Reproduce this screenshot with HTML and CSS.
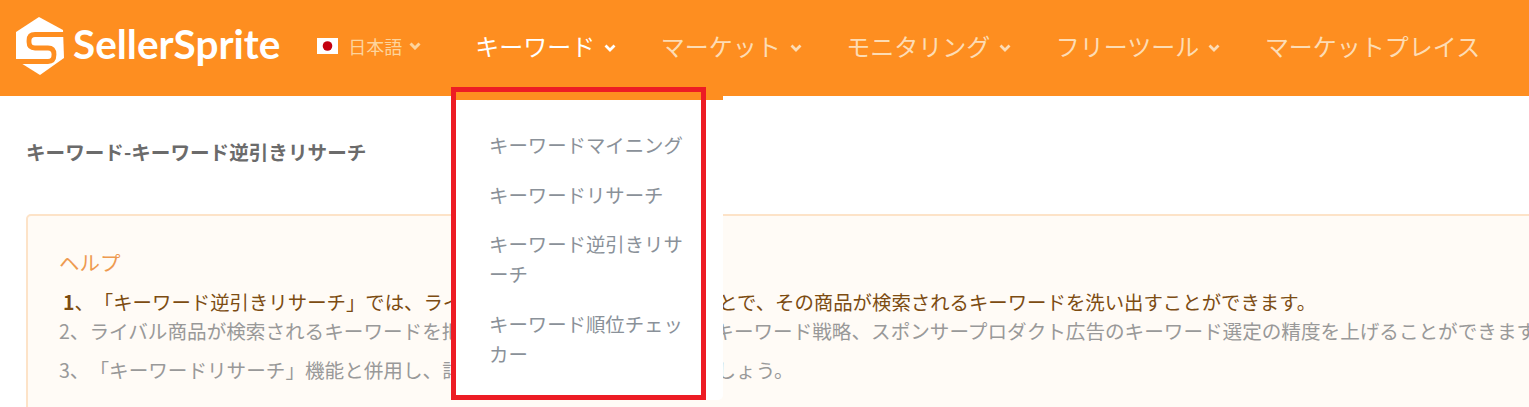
FILE: index.html
```html
<!DOCTYPE html>
<html lang="ja">
<head>
<meta charset="utf-8">
<title>SellerSprite</title>
<link rel="stylesheet" href="styles.css">
</head>
<body>
<header class="topbar">
  <a class="brand">
    <svg class="brand-mark" viewBox="0 0 50 58" width="50" height="58">
      <path class="hex" d="M24 0 48 13 49 41 25 58 1 43 1 15Z"/>
      <path class="s-cut" d="M52 17.500H20Q14 17.500 14 23.500V25Q14 31 20 31H33Q39 31 39 37.500Q39 44.500 33 44.500H-2"/>
    </svg>
    <span class="brand-name">SellerSprite</span>
  </a>
  <div class="lang">
    <svg class="flag" viewBox="0 0 21 16" width="21" height="16"><rect width="21" height="16" fill="#fff"/><circle cx="10.500" cy="8" r="4.800" fill="#c4000f"/></svg>
    <span>日本語</span>
    <svg class="chev" viewBox="0 0 12 8" width="12" height="8"><path d="M1.500 1.500 6 6 10.500 1.500"/></svg>
  </div>
  <nav class="nav">
    <a class="nav-item active">キーワード<svg class="chev" viewBox="0 0 12 8" width="12" height="8"><path d="M1.500 1.500 6 6 10.500 1.500"/></svg></a>
    <a class="nav-item">マーケット<svg class="chev" viewBox="0 0 12 8" width="12" height="8"><path d="M1.500 1.500 6 6 10.500 1.500"/></svg></a>
    <a class="nav-item">モニタリング<svg class="chev" viewBox="0 0 12 8" width="12" height="8"><path d="M1.500 1.500 6 6 10.500 1.500"/></svg></a>
    <a class="nav-item">フリーツール<svg class="chev" viewBox="0 0 12 8" width="12" height="8"><path d="M1.500 1.500 6 6 10.500 1.500"/></svg></a>
    <a class="nav-item">マーケットプレイス</a>
  </nav>
</header>
<main class="content">
  <h1 class="page-title">キーワード-キーワード逆引きリサーチ</h1>
  <section class="help">
    <h2 class="help-title">ヘルプ</h2>
    <p class="help-lead"><b>1</b>、「キーワード逆引きリサーチ」では、ライバル商品のASINを入力することで、その商品が検索されるキーワードを洗い出すことができます。</p>
    <p class="help-line">2、ライバル商品が検索されるキーワードを把握することで、商品ページのキーワード戦略、スポンサープロダクト広告のキーワード選定の精度を上げることができます</p>
    <p class="help-line">3、「キーワードリサーチ」機能と併用し、詳細なキーワード分析を行いましょう。</p>
  </section>
</main>
<div class="dropdown">
  <a class="dropdown-item">キーワードマイニング</a>
  <a class="dropdown-item">キーワードリサーチ</a>
  <a class="dropdown-item">キーワード逆引きリサーチ</a>
  <a class="dropdown-item">キーワード順位チェッカー</a>
</div>
<div class="highlight"></div>
</body>
</html>
```
FILE: styles.css
```css
* { box-sizing: border-box; }
html, body { margin: 0; height: 407px; overflow: hidden; }
body {
  background: #fff;
  font-family: "Noto Sans CJK JP", "Liberation Sans", sans-serif;
  color: #666;
  text-spacing-trim: space-all;
  font-feature-settings: "palt" 0, "chws" 0;
}
.topbar {
  display: flex;
  align-items: center;
  height: 96px;
  padding: 0 0 5px 15px;
  background: #fe8e20;
  white-space: nowrap;
}
.brand { display: flex; align-items: center; gap: 8px; }
.brand-mark { display: block; }
.hex { fill: #fff; }
.s-cut { fill: none; stroke: #fe8e20; stroke-width: 4.800; }
.brand-name {
  font-family: "Lato", sans-serif;
  font-size: 40.500px;
  font-weight: 700;
  color: #fff;
  line-height: 1;
  margin-top: -2px;
}
.lang {
  display: flex;
  align-items: center;
  margin-left: 37px;
  font-size: 18px;
  color: #fdd49c;
}
.flag { margin-right: 10px; }
.lang .chev { margin-left: 7px; stroke: #fdd49c; stroke-width: 3; }
.chev { fill: none; stroke: currentColor; stroke-width: 2.800; }
.nav { display: flex; margin-left: 54px; gap: 44.500px; }
.nav-item {
  display: flex;
  align-items: center;
  font-size: 24px;
  line-height: 32px;
  color: #fddcb4;
}
.nav-item .chev { margin-left: 9px; margin-top: 4px; }
.nav-item.active { color: #fff; }
.content { padding: 0 0 0 26px; }
.page-title {
  margin: 41px 0 0;
  font-size: 19.600px;
  line-height: 30px;
  font-weight: 700;
  color: #6b6b6b;
}
.help {
  width: 1600px;
  height: 300px;
  margin-top: 47px;
  padding: 31px 31px;
  border: 2px solid #fde3c8;
  border-radius: 5px;
  background: #fffbf6;
  white-space: nowrap;
}
.help-title {
  margin: 0;
  font-size: 20.500px;
  line-height: 30px;
  font-weight: 400;
  color: #ee9a50;
}
.help-lead {
  margin: 11px 0 0 4px;
  font-size: 19.400px;
  line-height: 27px;
  color: #7c4c12;
}
.help-lead b { font-weight: 700; }
.help-line {
  margin: 7px 0 0;
  font-size: 19.600px;
  line-height: 32px;
  color: #999;
}
.help-lead + .help-line { margin-top: 0; }
.dropdown {
  position: absolute;
  left: 451px;
  top: 96px;
  width: 272px;
  height: 304px;
  padding: 30px 32px 0 38px;
  border-top: 4px solid #fe8e20;
  border-radius: 0 0 5px 5px;
  background: #fff;
}
.dropdown-item {
  display: block;
  margin-bottom: 19.500px;
  font-size: 19.400px;
  line-height: 30px;
  color: #8a9199;
}
.highlight {
  position: absolute;
  left: 451px;
  top: 87px;
  width: 255px;
  height: 313px;
  border: 5px solid #ed1c24;
}
```
